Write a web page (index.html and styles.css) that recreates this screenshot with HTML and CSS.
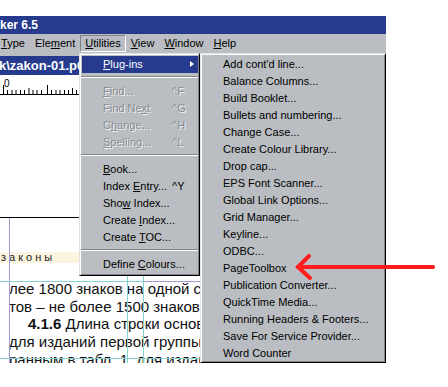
FILE: index.html
```html
<!DOCTYPE html>
<html lang="ru">
<head>
  <meta charset="UTF-8">
  <meta name="viewport" content="width=device-width, initial-scale=1.0">
  <title>PageMaker 6.5 — Utilities</title>
  <link rel="stylesheet" href="styles.css">
</head>
<body>
  <div class="window">
    <div class="titlebar">ker 6.5</div>

    <div class="menubar">
      <span class="menubar-item"><u>T</u>ype</span>
      <span class="menubar-item">Ele<u>m</u>ent</span>
      <span class="menubar-item is-open"><u>U</u>tilities</span>
      <span class="menubar-item"><u>V</u>iew</span>
      <span class="menubar-item"><u>W</u>indow</span>
      <span class="menubar-item"><u>H</u>elp</span>
    </div>

    <div class="workspace">
      <div class="doc">
        <div class="doc-title">k\zakon-01.p6</div>
        <div class="ruler">
          <svg width="386" height="21" viewBox="0 0 386 21">
            <text x="4" y="12" class="ruler-label">0</text>
            <path d="M0 19.5H386" stroke="#000" stroke-width="1"/>
            <path d="M3.5 10V19M7.5 15V19M12 15V19M16 15V19M20.5 15V19M24.5 15V19M29 13V19M33 15V19M37 15V19M41.5 15V19M47.5 10V19M51.5 15V19M56 15V19M60 15V19M64.5 15V19M68.5 15V19M72.5 13V19M76.5 15V19" stroke="#000" stroke-width="1"/>
          </svg>
        </div>
        <div class="pasteboard"></div>
        <div class="page">
          <div class="running-head">законы</div>
          <div class="page-text">
            <p>лее 1800 знаков на одной ст</p>
            <p>тов – не более 1500 знаков.</p>
            <p class="indent"><b>4.1.6</b> Длина строки основ</p>
            <p>для изданий первой группы</p>
            <p>ранным в табл. 1, для издан</p>
          </div>
          <span class="guide-v guide-margin" style="left: 9px"></span>
          <span class="guide-v" style="left: 127px"></span>
          <span class="guide-v" style="left: 143px"></span>
          <span class="guide-h" style="top: 63px"></span>
          <span class="guide-h guide-margin" style="top: 63px; left: 143px"></span>
          <span class="guide-h" style="top: 140px"></span>
        </div>
      </div>

      <!-- Utilities drop-down -->
      <div class="menu menu-utilities">
        <div class="menu-item is-active has-sub"><span class="label"><u>P</u>lug-ins</span></div>
        <div class="menu-sep"></div>
        <div class="menu-item is-disabled"><span class="label"><u>F</u>ind...</span><span>^F</span></div>
        <div class="menu-item is-disabled"><span class="label">Find Ne<u>x</u>t</span><span>^G</span></div>
        <div class="menu-item is-disabled"><span class="label">C<u>h</u>ange...</span><span>^H</span></div>
        <div class="menu-item is-disabled"><span class="label"><u>S</u>pelling...</span><span>^L</span></div>
        <div class="menu-sep"></div>
        <div class="menu-item"><span class="label"><u>B</u>ook...</span></div>
        <div class="menu-item"><span class="label">Index <u>E</u>ntry...</span><span>^Y</span></div>
        <div class="menu-item"><span class="label">Sho<u>w</u> Index...</span></div>
        <div class="menu-item"><span class="label">Create <u>I</u>ndex...</span></div>
        <div class="menu-item"><span class="label">Create <u>T</u>OC...</span></div>
        <div class="menu-sep"></div>
        <div class="menu-item"><span class="label">Define <u>C</u>olours...</span></div>
      </div>

      <!-- Plug-ins submenu -->
      <div class="menu menu-plugins">
        <div class="menu-item">Add cont'd line...</div>
        <div class="menu-item">Balance Columns...</div>
        <div class="menu-item">Build Booklet...</div>
        <div class="menu-item">Bullets and numbering...</div>
        <div class="menu-item">Change Case...</div>
        <div class="menu-item">Create Colour Library...</div>
        <div class="menu-item">Drop cap...</div>
        <div class="menu-item">EPS Font Scanner...</div>
        <div class="menu-item">Global Link Options...</div>
        <div class="menu-item">Grid Manager...</div>
        <div class="menu-item">Keyline...</div>
        <div class="menu-item">ODBC...</div>
        <div class="menu-item">PageToolbox</div>
        <div class="menu-item">Publication Converter...</div>
        <div class="menu-item">QuickTime Media...</div>
        <div class="menu-item">Running Headers &amp; Footers...</div>
        <div class="menu-item">Save For Service Provider...</div>
        <div class="menu-item">Word Counter</div>
      </div>

      <!-- red pointer drawn over the screenshot -->
      <svg class="pointer-arrow" width="448" height="310" viewBox="0 0 448 310">
        <defs>
          <filter id="soft" x="-5%" y="-50%" width="110%" height="200%">
            <feGaussianBlur stdDeviation="0.6"/>
          </filter>
        </defs>
        <g stroke="#ff1c1c" stroke-width="4" stroke-linecap="round" fill="none" filter="url(#soft)">
          <path d="M298 214H433"/>
          <path d="M309 203L298 214L310 225"/>
        </g>
      </svg>
    </div>
  </div>
</body>
</html>
```

FILE: styles.css
```css
body {
  margin: 0;
  background: #fff;
  font-family: "Liberation Sans", Arial, sans-serif;
  color: #000;
}
.window {
  width: 386px;
  margin-top: 16px;
}
.titlebar {
  height: 18px;
  background: #263b8e;
  color: #fff;
  font-weight: bold;
  font-size: 12px;
  line-height: 18px;
  white-space: nowrap;
}
.menubar {
  display: flex;
  height: 19px;
  background: #babec2;
  font-size: 11px;
  white-space: nowrap;
  overflow: hidden;
}
.menubar-item {
  margin-top: 1px;
  height: 15px;
  line-height: 15px;
  padding: 0 4px;
  border: 1px solid transparent;
}
.menubar-item:first-child {
  margin-left: -4px;
}
.menubar-item.is-open {
  border-color: #80848a #fff #fff #80848a;
}
.workspace {
  position: relative;
  height: 310px;
}
.doc {
  width: 200px;
  height: 310px;
  box-sizing: border-box;
  padding-top: 3px;
  background: #babec2;
  overflow: hidden;
}
.doc-title {
  height: 19px;
  margin-left: -1px;
  background: #263b8e;
  color: #fff;
  font-weight: bold;
  font-size: 13px;
  line-height: 19px;
  white-space: nowrap;
}
.ruler {
  height: 21px;
  background: #fff;
}
.ruler svg {
  display: block;
}
.ruler-label {
  font-family: "Liberation Sans", Arial, sans-serif;
  font-size: 10px;
}
.pasteboard {
  height: 121px;
  background: #fff;
}
.page {
  position: relative;
  height: 145px;
  border-top: 1px solid #000;
  background: #fff;
  overflow: hidden;
}
.running-head {
  margin-top: 34px;
  height: 11px;
  padding-left: 1px;
  background: #fbf5df;
  font-size: 11px;
  line-height: 11px;
  letter-spacing: 3px;
  color: #222;
}
.page-text {
  margin-top: 17px;
  padding-left: 9px;
  font-size: 15px;
  line-height: 17.67px;
  color: #111;
  white-space: nowrap;
}
.page-text p {
  margin: 0;
}
.page-text .indent {
  padding-left: 19px;
}
.guide-v {
  position: absolute;
  top: 0;
  bottom: 0;
  width: 1px;
  background: #86d2d0;
}
.guide-h {
  position: absolute;
  left: 0;
  right: 0;
  height: 1px;
  background: #86d2d0;
}
.guide-margin {
  background: #a59ad8;
}
.menu {
  position: absolute;
  top: 0;
  box-sizing: border-box;
  padding: 2px;
  background: #babec2;
  border: 1px solid;
  border-color: #dfe1e3 #000 #000 #dfe1e3;
  box-shadow: inset 1px 1px #fff, inset -1px -1px #80848a;
  font-size: 11px;
  white-space: nowrap;
}
.menu-utilities {
  left: 79px;
  width: 121px;
}
.menu-plugins {
  left: 200px;
  width: 186px;
  height: 310px;
  padding-bottom: 0;
}
.menu-item {
  position: relative;
  display: flex;
  height: 17px;
  line-height: 17px;
  padding-left: 21px;
}
.menu-plugins .menu-item {
  padding-left: 20px;
}
.menu-item .label {
  width: 69px;
}
.menu-item.is-active {
  margin-right: -1px;
  background: #263b8e;
  color: #fff;
}
.menu-item.has-sub::after {
  content: "";
  position: absolute;
  right: 4px;
  top: 5px;
  border-left: 4px solid #fff;
  border-top: 3.5px solid transparent;
  border-bottom: 3.5px solid transparent;
}
.menu-item.is-disabled {
  color: #888c90;
  text-shadow: 1px 1px 0 #f2f4f6;
}
.menu-sep {
  margin: 3px -1px 5px;
  border-top: 1px solid #80848a;
  border-bottom: 1px solid #fff;
}
.pointer-arrow {
  position: absolute;
  left: 0;
  top: 0;
  overflow: visible;
  pointer-events: none;
}
```
